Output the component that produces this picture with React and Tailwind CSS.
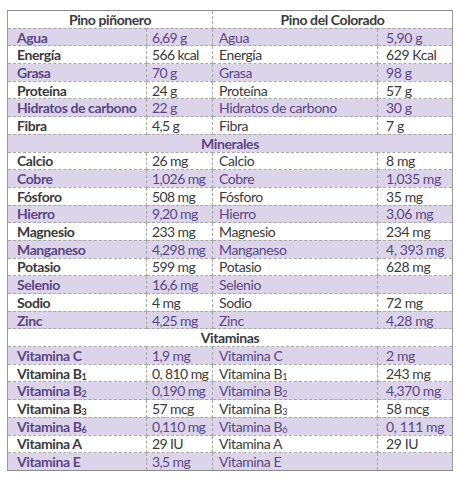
import React from "react";

const B = ({ n }) => (
  <>
    B<sub className="text-[9px] relative top-[1px] align-baseline">{n}</sub>
  </>
);

const rows = [
  { t: "h" },
  ["Agua", "6,69 g", "Agua", "5,90 g"],
  ["Energía", "566 kcal", "Energía", "629 Kcal"],
  ["Grasa", "70 g", "Grasa", "98 g"],
  ["Proteína", "24 g", "Proteína", "57 g"],
  ["Hidratos de carbono", "22 g", "Hidratos de carbono", "30 g"],
  ["Fibra", "4,5 g", "Fibra", "7 g"],
  { t: "s", label: "Minerales" },
  ["Calcio", "26 mg", "Calcio", "8 mg"],
  ["Cobre", "1,026 mg", "Cobre", "1,035 mg"],
  ["Fósforo", "508 mg", "Fósforo", "35 mg"],
  ["Hierro", "9,20 mg", "Hierro", "3,06 mg"],
  ["Magnesio", "233 mg", "Magnesio", "234 mg"],
  ["Manganeso", "4,298 mg", "Manganeso", "4, 393 mg"],
  ["Potasio", "599 mg", "Potasio", "628 mg"],
  ["Selenio", "16,6 mg", "Selenio", ""],
  ["Sodio", "4 mg", "Sodio", "72 mg"],
  ["Zinc", "4,25 mg", "Zinc", "4,28 mg"],
  { t: "s", label: "Vitaminas" },
  ["Vitamina C", "1,9 mg", "Vitamina C", "2 mg"],
  [<>Vitamina <B n="1" /></>, "0, 810 mg", <>Vitamina <B n="1" /></>, "243 mg"],
  [<>Vitamina <B n="2" /></>, "0,190 mg", <>Vitamina <B n="2" /></>, "4,370 mg"],
  [<>Vitamina <B n="3" /></>, "57 mcg", <>Vitamina <B n="3" /></>, "58 mcg"],
  [<>Vitamina <B n="6" /></>, "0,110 mg", <>Vitamina <B n="6" /></>, "0, 111 mg"],
  ["Vitamina A", "29 IU", "Vitamina A", "29 IU"],
  ["Vitamina E", "3,5 mg", "Vitamina E", ""],
];

export default function App() {
  return (
    <div
      className="w-[460px] h-[479px] bg-white pt-[10px] pl-[7px]"
      style={{ fontFamily: "Lato, 'Open Sans', sans-serif" }}
    >
      <table className="border-collapse table-fixed w-[445px] text-[14px] tracking-[-0.4px] leading-none border-t border-t-[#8a8a8a] border-b border-b-[#8a8a8a] border-l border-l-[#9a9a9a] border-l-dashed border-r border-r-[#9a9a9a] border-r-dashed">
        <colgroup>
          <col className="w-[139px]" />
          <col className="w-[66px]" />
          <col className="w-[165px]" />
          <col className="w-[75px]" />
        </colgroup>
        <tbody>
          {rows.map((r, i) => {
            const purple = i % 2 === 1;
            const bg = purple ? "bg-[#dcd5e9]" : "bg-white";
            const color = purple ? "text-[#5b4787]" : "text-[#3a3a3a]";
            const cellB = "border-b border-dashed border-b-[#a8a8a8] pt-[1px]";
            if (!Array.isArray(r) && r.t === "h") {
              return (
                <tr key={i} className={`h-[17.7px] ${bg} ${color}`}>
                  <td colSpan={2} className={`${cellB} border-r border-r-[#a8a8a8] text-center font-bold`}>
                    Pino piñonero
                  </td>
                  <td colSpan={2} className={`${cellB} text-center font-bold`}>
                    Pino del Colorado
                  </td>
                </tr>
              );
            }
            if (!Array.isArray(r) && r.t === "s") {
              return (
                <tr key={i} className={`h-[17.7px] ${bg} ${color}`}>
                  <td colSpan={4} className={`${cellB} text-center font-bold`}>
                    {r.label}
                  </td>
                </tr>
              );
            }
            return (
              <tr key={i} className={`h-[17.7px] ${bg} ${color}`}>
                <td className={`${cellB} border-r border-r-[#a8a8a8] pl-[9px] font-bold whitespace-nowrap`}>{r[0]}</td>
                <td className={`${cellB} border-r border-r-[#a8a8a8] pl-[5px] tracking-[-0.6px] whitespace-nowrap`}>{r[1]}</td>
                <td className={`${cellB} border-r border-r-[#a8a8a8] pl-[6px] whitespace-nowrap`}>{r[2]}</td>
                <td className={`${cellB} pl-[8px] whitespace-nowrap`}>{r[3]}</td>
              </tr>
            );
          })}
        </tbody>
      </table>
    </div>
  );
}
